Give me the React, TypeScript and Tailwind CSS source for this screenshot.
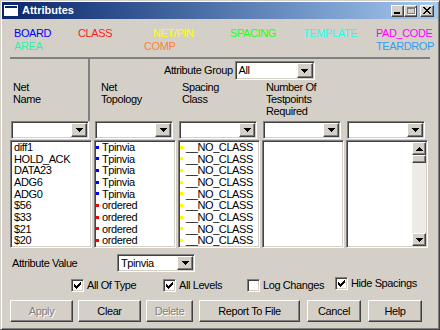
import React from "react";

const raised =
  "border border-t-white border-l-white border-r-[#404040] border-b-[#404040] shadow-[inset_-1px_-1px_#808080,inset_1px_1px_#d4d0c8]";
const sunken =
  "border border-t-[#808080] border-l-[#808080] border-r-white border-b-white shadow-[inset_1px_1px_#404040,inset_-1px_-1px_#d4d0c8]";

function DownArrow() {
  return (
    <svg width="7" height="4" viewBox="0 0 7 4" shapeRendering="crispEdges">
      <path d="M0 0h7v1h-7zM1 1h5v1h-5zM2 2h3v1h-3zM3 3h1v1h-1z" fill="#000" />
    </svg>
  );
}

function UpArrow() {
  return (
    <svg width="7" height="4" viewBox="0 0 7 4" shapeRendering="crispEdges">
      <path d="M3 0h1v1h-1zM2 1h3v1h-3zM1 2h5v1h-5zM0 3h7v1h-7z" fill="#000" />
    </svg>
  );
}

function Combo({ value = "", w, h = "h-[18px]" }: { value?: string; w: string; h?: string }) {
  return (
    <div className={`${sunken} ${w} ${h} bg-white p-px flex shrink-0`}>
      <div className="flex-1 pl-[2px] flex items-center text-black truncate">{value}</div>
      <div className={`${raised} w-[16px] bg-[#d4d0c8] flex items-center justify-center`}>
        <DownArrow />
      </div>
    </div>
  );
}

function Check({ checked, label }: { checked: boolean; label: string }) {
  return (
    <div className="flex items-center gap-[3px]">
      <div className={`${sunken} w-[13px] h-[13px] bg-white flex items-center justify-center shrink-0`}>
        {checked && (
          <svg width="7" height="7" viewBox="0 0 7 7" shapeRendering="crispEdges">
            <path
              d="M6 0h1v1h-1zM5 1h2v1h-2zM0 2h1v1h-1zM4 2h3v1h-3zM0 3h2v1h-2zM3 3h3v1h-3zM0 4h5v1h-5zM1 5h3v1h-3zM2 6h1v1h-1z"
              fill="#000"
            />
          </svg>
        )}
      </div>
      <span>{label}</span>
    </div>
  );
}

function Btn({ label, w, disabled }: { label: string; w: string; disabled?: boolean }) {
  return (
    <div
      className={`${raised} ${w} h-[22px] flex items-center justify-center shrink-0 ${
        disabled ? "text-[#808080] [text-shadow:1px_1px_#ffffff]" : "text-black"
      }`}
    >
      {label}
    </div>
  );
}

const nets = ["diff1", "HOLD_ACK", "DATA23", "ADG6", "ADG0", "$56", "$33", "$21", "$20"];
const topo = ["Tpinvia", "Tpinvia", "Tpinvia", "Tpinvia", "Tpinvia", "ordered", "ordered", "ordered", "ordered"];

export default function App() {
  return (
    <div className="w-[440px] h-[330px] bg-[#d4d0c8] border border-t-[#d4d0c8] border-l-[#d4d0c8] border-r-[#404040] border-b-[#404040] shadow-[inset_1px_1px_#ffffff,inset_-1px_-1px_#808080] p-px font-['Liberation_Sans',Arial,sans-serif] text-[11px] tracking-[-0.4px] text-black overflow-hidden">
      {/* title bar */}
      <div className="h-[17px] bg-gradient-to-r from-[#0a246a] to-[#a6caf0] flex items-center pl-[2px] pr-[4px]">
        <svg width="14" height="11" viewBox="0 0 14 11" shapeRendering="crispEdges" className="mr-[4px]">
          <rect x="0" y="0" width="14" height="11" fill="#ffffff" />
          <rect x="1" y="1" width="12" height="2" fill="#0a246a" />
        </svg>
        <span className="text-white font-bold tracking-normal flex-1">Attributes</span>
        <div className={`${raised} w-[13px] h-[12px] bg-[#d4d0c8] flex items-end justify-center pb-[2px]`}>
          <div className="w-[6px] h-[2px] bg-black ml-[-2px]" />
        </div>
        <div className={`${raised} w-[13px] h-[12px] bg-[#d4d0c8] flex items-center justify-center`}>
          <div className="w-[8px] h-[7px] border border-[#808080] border-t-2 shadow-[1px_1px_#ffffff]" />
        </div>
        <div className={`${raised} w-[14px] h-[12px] bg-[#d4d0c8] flex items-center justify-center ml-[3px]`}>
          <svg width="8" height="7" viewBox="0 0 8 7" shapeRendering="crispEdges">
            <path
              d="M0 0h2v1h-2zM6 0h2v1h-2zM1 1h2v1h-2zM5 1h2v1h-2zM2 2h4v1h-4zM3 3h2v1h-2zM2 4h4v1h-4zM1 5h2v1h-2zM5 5h2v1h-2zM0 6h2v1h-2zM6 6h2v1h-2z"
              fill="#000"
            />
          </svg>
        </div>
      </div>

      {/* colour legend */}
      <div className="pl-[12px] pt-[8px] leading-[13px]">
        <div className="flex h-[13px]">
          <span className="w-[64px] text-[#0000ff]">BOARD</span>
          <span className="w-[75px] text-[#ff1a1a]">CLASS</span>
          <span className="w-[77px] text-[#ffff00]">NET/PIN</span>
          <span className="w-[73px] text-[#22ff22]">SPACING</span>
          <span className="w-[73px] text-[#22ffee]">TEMPLATE</span>
          <span className="text-[#ff00ff]">PAD_CODE</span>
        </div>
        <div className="flex h-[13px]">
          <span className="w-[130px] text-[#30f0a8]">AREA</span>
          <span className="w-[232px] text-[#ff7f40]">COMP</span>
          <span className="text-[#2f9ef5]">TEARDROP</span>
        </div>
      </div>

      {/* header group */}
      <div className="ml-[8px] mt-[4px] w-[420px] border-t-2 border-t-[#808080] flex h-[64px]">
        <div className="w-[80px] border-r-2 border-r-[#808080] pl-[3px] pt-[22px] leading-[12px]">
          <div>Net</div>
          <div>Name</div>
        </div>
        <div className="flex-1">
          <div className="flex items-center pl-[74px] mt-[2px] h-[19px]">
            <span className="mr-[2px]">Attribute Group</span>
            <Combo value="All" w="w-[80px]" h="h-[19px]" />
          </div>
          <div className="flex mt-[1px] leading-[12px]">
            <div className="w-[92px] pl-[11px]">
              <div>Net</div>
              <div>Topology</div>
            </div>
            <div className="w-[84px]">
              <div>Spacing</div>
              <div>Class</div>
            </div>
            <div>
              <div>Number Of</div>
              <div>Testpoints</div>
              <div>Required</div>
            </div>
          </div>
        </div>
      </div>

      {/* filters */}
      <div className="flex gap-[6px] ml-[9px]">
        <Combo w="w-[78px]" />
        <Combo w="w-[78px]" />
        <Combo w="w-[78px]" />
        <Combo w="w-[78px]" />
        <Combo w="w-[78px]" />
      </div>

      {/* lists */}
      <div className="flex gap-[2px] ml-[8px] mt-px h-[108px]">
        <div className={`${sunken} w-[82px] bg-white p-px pl-[2px] overflow-hidden`}>
          {nets.map((n) => (
            <div key={n} className="h-[11.67px] leading-[11.67px] pl-px">
              {n}
            </div>
          ))}
        </div>
        <div className={`${sunken} w-[82px] bg-white p-px overflow-hidden`}>
          {topo.map((t, i) => (
            <div key={i} className="h-[11.67px] leading-[11.67px] flex items-center">
              <div
                className={`w-[3px] h-[3px] shrink-0 mr-[3px] mt-[-1px] ${
                  t === "Tpinvia" ? "bg-[#0000ff]" : "bg-[#ff0000]"
                }`}
              />
              <span>{t}</span>
            </div>
          ))}
        </div>
        <div className={`${sunken} w-[82px] bg-white p-px overflow-hidden`}>
          {nets.map((_, i) => (
            <div key={i} className="h-[11.67px] leading-[11.67px] flex items-center">
              <div className="w-[3px] h-[3px] shrink-0 mr-[3px] mt-[-1px] bg-[#ffff00]" />
              <span>__NO_CLASS</span>
            </div>
          ))}
        </div>
        <div className={`${sunken} w-[82px] bg-white p-px`} />
        <div className={`${sunken} w-[82px] bg-white p-px flex justify-end`}>
          <div className="w-[14px] bg-[#ecebe7] flex flex-col">
            <div className={`${raised} h-[13px] bg-[#d4d0c8] flex items-center justify-center`}>
              <UpArrow />
            </div>
            <div className={`${raised} h-[8px] bg-[#d4d0c8]`} />
            <div className="flex-1" />
            <div className={`${raised} h-[13px] bg-[#d4d0c8] flex items-center justify-center`}>
              <DownArrow />
            </div>
          </div>
        </div>
      </div>

      {/* attribute value */}
      <div className="flex items-center mt-[6px] ml-[10px]">
        <span className="w-[105px]">Attribute Value</span>
        <Combo value="Tpinvia" w="w-[78px]" />
      </div>

      {/* options */}
      <div className="flex mt-[5px] ml-[69px] h-[13px]">
        <div className="w-[92px]">
          <Check checked label="All Of Type" />
        </div>
        <div className="w-[84px]">
          <Check checked label="All Levels" />
        </div>
        <div className="w-[88px]">
          <Check checked={false} label="Log Changes" />
        </div>
        <Check checked label="Hide Spacings" />
      </div>

      {/* buttons */}
      <div className="flex mt-[10px] ml-[8px]">
        <Btn label="Apply" w="w-[63px]" disabled />
        <div className="w-[5px]" />
        <Btn label="Clear" w="w-[63px]" />
        <div className="w-[5px]" />
        <Btn label="Delete" w="w-[47px]" disabled />
        <div className="w-[6px]" />
        <Btn label="Report To File" w="w-[101px]" />
        <div className="w-[7px]" />
        <Btn label="Cancel" w="w-[54px]" />
        <div className="w-[7px]" />
        <Btn label="Help" w="w-[54px]" />
      </div>
    </div>
  );
}
